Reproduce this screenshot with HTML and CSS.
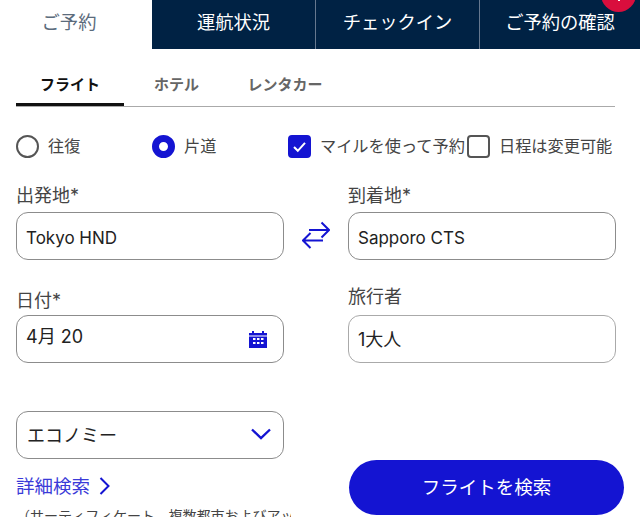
FILE: index.html
```html
<!DOCTYPE html>
<html lang="ja">
<head>
  <meta charset="UTF-8" />
  <meta name="viewport" content="width=device-width, initial-scale=1.0"/>
  <title>ご予約</title>
  <link rel="stylesheet" href="styles.css">
</head>
<body>

<div class="page">
  <div class="badge"></div>

  <nav class="tabs">
    <a class="tab active">ご予約</a>
    <a class="tab">運航状況</a>
    <a class="tab">チェックイン</a>
    <a class="tab">ご予約の確認</a>
  </nav>

  <div class="subtabs">
    <a class="subtab current">フライト</a>
    <a class="subtab">ホテル</a>
    <a class="subtab">レンタカー</a>
  </div>

  <div class="options">
    <div class="option"><span class="radio"></span>往復</div>
    <div class="option"><span class="radio on"></span>片道</div>
    <div class="option">
      <span class="check on">
        <svg width="17" height="17" viewBox="0 0 17 17"><path d="M3 9l3.800 3.800L14 4.800" fill="none" stroke="#fff" stroke-width="2"/></svg>
      </span>
      マイルを使って予約
    </div>
    <div class="option"><span class="check"></span>日程は変更可能</div>
  </div>

  <div class="row row-route">
    <div class="field">
      <label class="route-label">出発地*</label>
      <div class="input latin">Tokyo HND</div>
    </div>
    <div class="swap">
      <svg width="28" height="28" viewBox="0 0 28 28" fill="none" stroke="#1414d2" stroke-width="2">
        <path d="M7 9H27M19.500 1.500L27 9l-7.500 7.500"/>
        <path d="M21 19.500H1M8.500 12L1 19.500 8.500 27"/>
      </svg>
    </div>
    <div class="field">
      <label class="route-label">到着地*</label>
      <div class="input latin">Sapporo CTS</div>
    </div>
  </div>

  <div class="row row-date">
    <div class="field">
      <label class="date-label">日付*</label>
      <div class="input date">
        <span class="date-value">4月 20</span>
        <svg width="18" height="18" viewBox="0 0 18 18">
          <path fill="#1414d2" d="M0 3h3V1h2v2h8V1h2v2h3v15H0z"/>
          <path fill="#fff" d="M0 5.500h18v1H0zM4 8h2.500v2H4zM8 8h2.500v2H8zM12 8h2.500v2H12zM4 12h2.500v2H4zM8 12h2.500v2H8zM12 12h2.500v2H12z"/>
        </svg>
      </div>
    </div>
    <div></div>
    <div class="field">
      <label>旅行者</label>
      <div class="input light">1大人</div>
    </div>
  </div>

  <div class="row row-cabin">
    <div class="input cabin">
      <span>エコノミー</span>
      <svg width="20" height="12" viewBox="0 0 20 12"><path d="M1 1.500l9 8.500 9-8.500" fill="none" stroke="#1414d2" stroke-width="2.400"/></svg>
    </div>
  </div>

  <div class="row row-bottom">
    <div class="more">
      <a class="more-link">詳細検索
        <svg width="11" height="18" viewBox="0 0 11 18"><path d="M1.500 1l8 8-8 8" fill="none" stroke="#1414d2" stroke-width="2"/></svg>
      </a>
      <p class="note">（サーティフィケート、複数都市およびアップグレード）</p>
    </div>
    <div></div>
    <button class="search">フライトを検索</button>
  </div>
</div>

</body>
</html>
```

FILE: styles.css
```css
html, body {
  margin: 0;
  padding: 0;
  height: 100%;
  overflow: hidden;
}

body {
  font-family: Inter, "Noto Sans CJK JP", sans-serif;
  color: #222;
  background: #fff;
}

.page {
  position: relative;
  height: 517px;
  overflow: hidden;
}

.badge {
  position: absolute;
  top: -23px;
  left: 601px;
  width: 35px;
  height: 35px;
  border-radius: 50%;
  background: #d90e3d;
}

.badge::after {
  content: "";
  position: absolute;
  top: 23px;
  left: 17px;
  width: 2px;
  height: 1px;
  background: #fff;
}

.tabs {
  display: grid;
  grid-template-columns: 152px 163px 164px 161px;
  height: 49px;
}

.tab {
  display: flex;
  align-items: center;
  justify-content: center;
  padding-bottom: 8px;
  box-sizing: border-box;
  font-size: 18.300px;
  background: #002244;
  color: #fff;
  border-left: 1px solid #66788f;
}

.tab.active {
  background: #fff;
  color: #5b6b7c;
  border-left: 0;
  padding-right: 14px;
}

.tab.active + .tab {
  border-left: 0;
}

.subtabs {
  display: flex;
  margin: 24px 25px 0 16px;
  height: 33px;
  border-bottom: 1px solid #aaa;
}

.subtab {
  height: 32px;
  text-align: center;
  font-size: 15px;
  font-weight: 700;
  line-height: 24px;
  color: #666;
}

.subtab:nth-child(1) {
  width: 108px;
}

.subtab:nth-child(2) {
  width: 105px;
}

.subtab:nth-child(3) {
  width: 112px;
}

.subtab.current {
  color: #111;
  border-bottom: 3px solid #111;
  height: 30px;
}

.options {
  display: grid;
  grid-template-columns: 136px 136px 179px 1fr;
  margin: 27px 0 0 16px;
  height: 24px;
}

.option {
  display: flex;
  align-items: center;
  font-size: 16.200px;
  line-height: 24px;
  color: #444;
  white-space: nowrap;
}

.radio {
  width: 23px;
  height: 23px;
  box-sizing: border-box;
  border-radius: 50%;
  border: 2px solid #555;
  margin-right: 9px;
}

.radio.on {
  border: 7px solid #1414d2;
  background: #fff;
}

.check {
  display: flex;
  align-items: center;
  justify-content: center;
  width: 23px;
  height: 23px;
  box-sizing: border-box;
  border-radius: 4px;
  border: 2px solid #555;
  margin-right: 9px;
  flex: none;
}

.check.on {
  border-color: #1414d2;
  background: #1414d2;
}

.row {
  display: grid;
  grid-template-columns: 268px 64px 268px;
  padding-left: 16px;
}

.row-route {
  margin-top: 26px;
}

.row-date {
  margin-top: 25px;
}

.row-cabin {
  margin-top: 48px;
}

.row-bottom {
  margin-top: 1px;
  grid-template-columns: 268px 65px 275px;
}

.field {
  display: flex;
  flex-direction: column;
  justify-content: flex-end;
}

label {
  display: block;
  font-size: 18px;
  line-height: 24px;
  margin-bottom: 6px;
  color: #444;
}

.route-label {
  margin-bottom: 4px;
}

.date-label {
  margin-bottom: 2px;
}

.input {
  display: flex;
  align-items: center;
  justify-content: space-between;
  box-sizing: border-box;
  height: 48px;
  padding: 0 9px;
  border: 1px solid #8c8c8c;
  border-radius: 12px;
  font-size: 18px;
  color: #222;
}

.input.latin {
  font-size: 17px;
  padding-top: 3px;
}

.input.light {
  border-color: #aaa;
  padding-bottom: 2px;
}

.date {
  padding-right: 16px;
}

.date-value {
  margin-bottom: 8px;
}

.cabin {
  padding: 0 12px 2px 10px;
}

.swap {
  display: flex;
  justify-content: center;
  align-items: flex-end;
  padding-bottom: 11px;
}

.swap svg {
  display: block;
}

.more {
  padding-top: 14px;
  white-space: nowrap;
  width: 290px;
}

.more-link {
  display: flex;
  align-items: center;
  gap: 9px;
  font-size: 18.500px;
  line-height: 24px;
  color: #3a3ad8;
}

.note {
  margin: 8px 0 0;
  font-size: 14px;
  line-height: 20px;
  width: 275px;
  overflow: hidden;
  color: #444;
}

.search {
  height: 55px;
  padding: 0 0 3px;
  border: 0;
  border-radius: 28px;
  background: #1414d2;
  color: #fff;
  font-family: inherit;
  font-size: 18.500px;
}
```
